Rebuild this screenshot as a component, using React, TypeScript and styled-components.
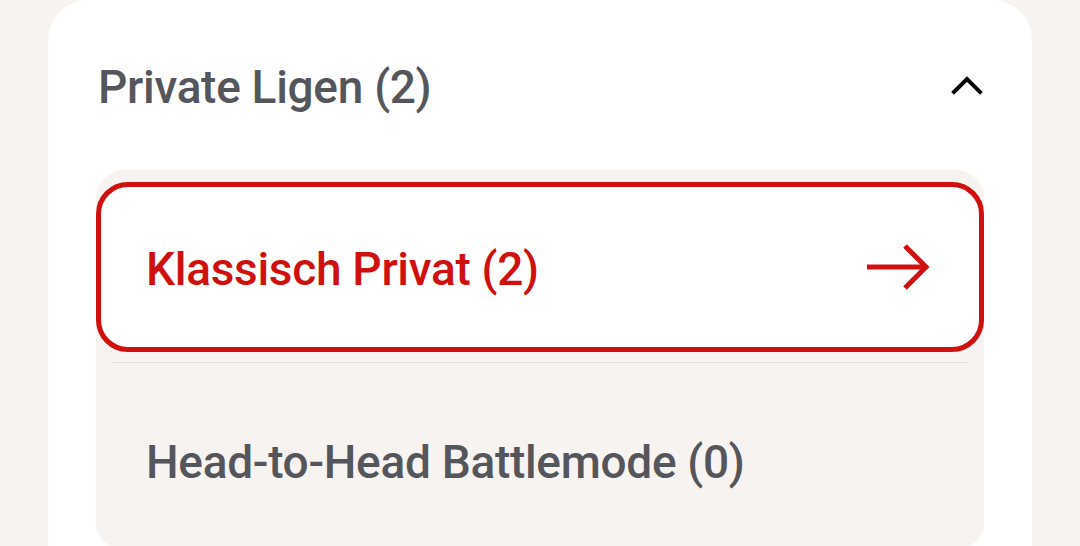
import React from "react";
import styled, { createGlobalStyle } from "styled-components";

const Global = createGlobalStyle`
  html, body { margin: 0; padding: 0; background: #f7f3f0; }
  body { font-family: Roboto, "Noto Sans", sans-serif; }
`;

const Page = styled.div`
  padding: 0 48px;
  height: 546px;
  overflow: hidden;
`;

const Card = styled.section`
  background: #ffffff;
  border-radius: 40px 40px 0 0;
  padding: 0 48px 0 48px;
  height: 600px;
`;

const Header = styled.div`
  height: 170px;
  display: flex;
  align-items: center;
  justify-content: space-between;
  padding-left: 2px;
  padding-right: 0;
`;

const Title = styled.h2`
  margin: 0;
  font-size: 46px;
  font-weight: 500;
  color: #55565b;
  letter-spacing: -0.3px;
  line-height: 1;
  padding-top: 4px;
`;

const ChevronButton = styled.button`
  border: 0;
  background: none;
  padding: 0;
  width: 40px;
  height: 40px;
  display: flex;
  align-items: center;
  justify-content: center;
  margin-right: -3px;
  cursor: pointer;
`;

const Panel = styled.div`
  background: #f7f3f0;
  border-radius: 28px;
  padding-top: 12px;
  height: 380px;
  box-sizing: border-box;
`;

const Item = styled.a<{ $active?: boolean }>`
  display: flex;
  align-items: center;
  justify-content: space-between;
  box-sizing: border-box;
  height: ${(p) => (p.$active ? "170px" : "193px")};
  padding: 0 49px 0 ${(p) => (p.$active ? "45px" : "50px")};
  border-radius: 32px;
  border: ${(p) => (p.$active ? "5px solid #d0100f" : "none")};
  background: ${(p) => (p.$active ? "#ffffff" : "transparent")};
  color: ${(p) => (p.$active ? "#d0100f" : "#55565b")};
  text-decoration: none;
`;

const ItemLabel = styled.span`
  font-size: 46px;
  font-weight: 500;
  line-height: 1;
  letter-spacing: -0.3px;
  padding-top: 4px;
`;

const Divider = styled.hr`
  margin: 10px 16px 0;
  border: 0;
  height: 1px;
  background: #e2dedb;
`;

const ChevronUp = () => (
  <svg width="32" height="24" viewBox="0 0 32 24" fill="none">
    <path d="M3 19 L16 6 L29 19" stroke="#000" strokeWidth="4" strokeLinecap="square" />
  </svg>
);

const ArrowRight = () => (
  <svg width="64" height="48" viewBox="0 0 64 48" fill="none">
    <path d="M1 24 H60" stroke="#d0100f" strokeWidth="5" />
    <path d="M39 3 L60 24 L39 45" stroke="#d0100f" strokeWidth="5" />
  </svg>
);

export default function App() {
  return (
    <>
      <Global />
      <Page>
        <Card>
          <Header>
            <Title>Private Ligen (2)</Title>
            <ChevronButton aria-label="Einklappen">
              <ChevronUp />
            </ChevronButton>
          </Header>
          <Panel>
            <Item $active href="#">
              <ItemLabel>Klassisch Privat (2)</ItemLabel>
              <ArrowRight />
            </Item>
            <Divider />
            <Item href="#">
              <ItemLabel>Head-to-Head Battlemode (0)</ItemLabel>
            </Item>
          </Panel>
        </Card>
      </Page>
    </>
  );
}
